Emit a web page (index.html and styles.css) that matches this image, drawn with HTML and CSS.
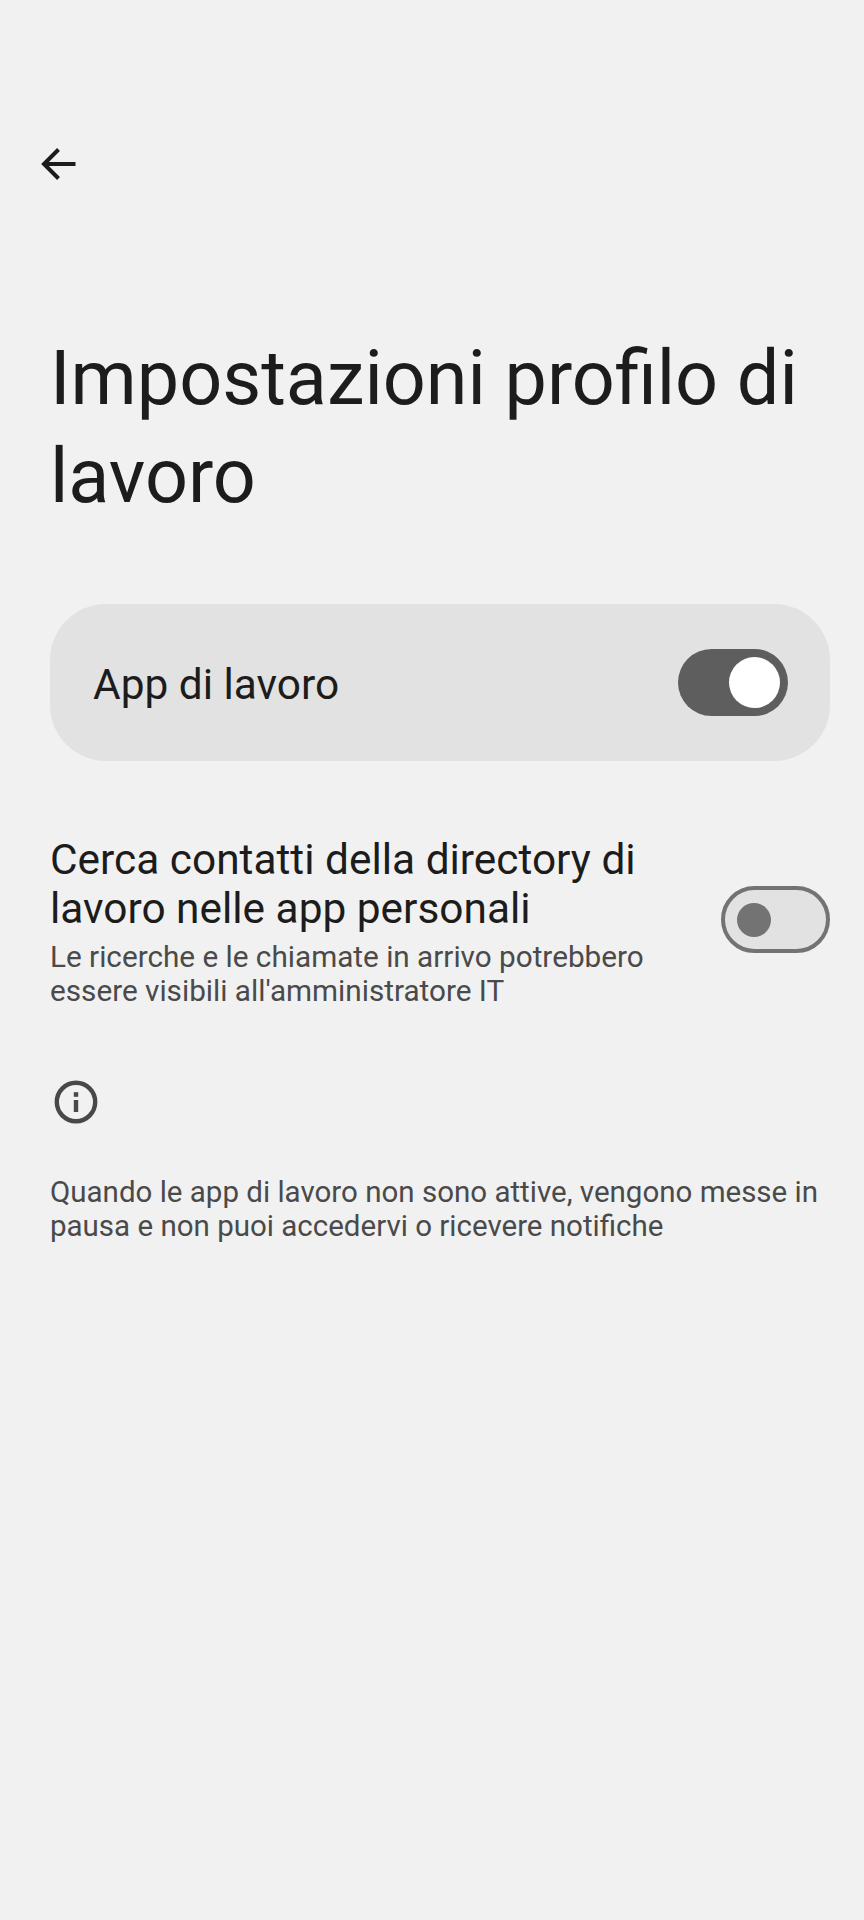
FILE: index.html
```html
<!DOCTYPE html>
<html lang="it">
<head>
<meta charset="utf-8">
<title>Impostazioni profilo di lavoro</title>
<link rel="stylesheet" href="styles.css">
</head>
<body>
<main class="screen">
  <header class="toolbar">
    <svg class="back" viewBox="0 0 36 36" width="36" height="36" aria-hidden="true"><path d="M35.5 18H4M18.5 3.5 4 18 18.5 32.5" fill="none" stroke="#1c1c1c" stroke-width="4"/></svg>
  </header>
  <h1 class="title">Impostazioni profilo di lavoro</h1>
  <section class="card">
    <span class="card-label">App di lavoro</span>
    <span class="switch switch-on"><span class="thumb-on"></span></span>
  </section>
  <section class="row">
    <div class="row-text">
      <div class="row-title">Cerca contatti della directory di lavoro nelle app personali</div>
      <div class="row-sub">Le ricerche e le chiamate in arrivo potrebbero essere visibili all'amministratore IT</div>
    </div>
    <span class="switch switch-off"><span class="thumb-off"></span></span>
  </section>
  <section class="info">
    <svg class="info-icon" viewBox="0 0 44 44" width="44" height="44" aria-hidden="true">
      <circle cx="22" cy="22" r="19.2" fill="none" stroke="#484848" stroke-width="4.4"/>
      <rect x="19.8" y="20" width="4.4" height="12" fill="#484848"/>
      <rect x="19.8" y="12.2" width="4.4" height="4.6" fill="#484848"/>
    </svg>
    <p class="info-text">Quando le app di lavoro non sono attive, vengono messe in pausa e non puoi accedervi o ricevere notifiche</p>
  </section>
</main>
</body>
</html>
```
FILE: styles.css
```css
* { box-sizing: border-box; }
html, body { margin: 0; padding: 0; }
body { background: #f1f1f1; font-family: Roboto, "Noto Sans", sans-serif; color: #1c1c1c; }
.screen { width: 864px; height: 1920px; padding: 0 34px 0 50px; overflow: hidden; }
.toolbar { height: 183px; padding-top: 146px; }
.back { display: block; margin-left: -10px; }
.title { margin: 146px 0 0; height: 196px; font-size: 75.5px; line-height: 98px; font-weight: 400; }
.card { margin-top: 79px; height: 157px; background: #e2e2e2; border-radius: 56px; display: flex; align-items: center; justify-content: space-between; padding: 0 42px 0 43px; }
.card-label { font-size: 42.4px; padding-top: 4px; }
.switch { flex: none; display: flex; align-items: center; border-radius: 34px; }
.switch-on { width: 110px; height: 67px; background: #5e5e5e; justify-content: flex-end; padding-right: 8px; }
.thumb-on { width: 51px; height: 51px; border-radius: 50%; background: #fff; }
.switch-off { width: 109px; height: 67px; background: #e2e2e2; border: 4px solid #737373; padding-left: 12px; margin-bottom: 4px; }
.thumb-off { width: 34px; height: 34px; border-radius: 50%; background: #737373; }
.row { margin-top: 74px; display: flex; align-items: center; justify-content: space-between; }
.row-text { width: 610px; }
.row-title { font-size: 42.4px; line-height: 49px; }
.row-sub { font-size: 29.7px; line-height: 34px; color: #4a4a4a; margin-top: 7px; }
.info { margin-top: 72px; }
.info-icon { display: block; margin-left: 4px; }
.info-text { margin: 51px 0 0; font-size: 29.5px; line-height: 34px; color: #4a4a4a; }
```
